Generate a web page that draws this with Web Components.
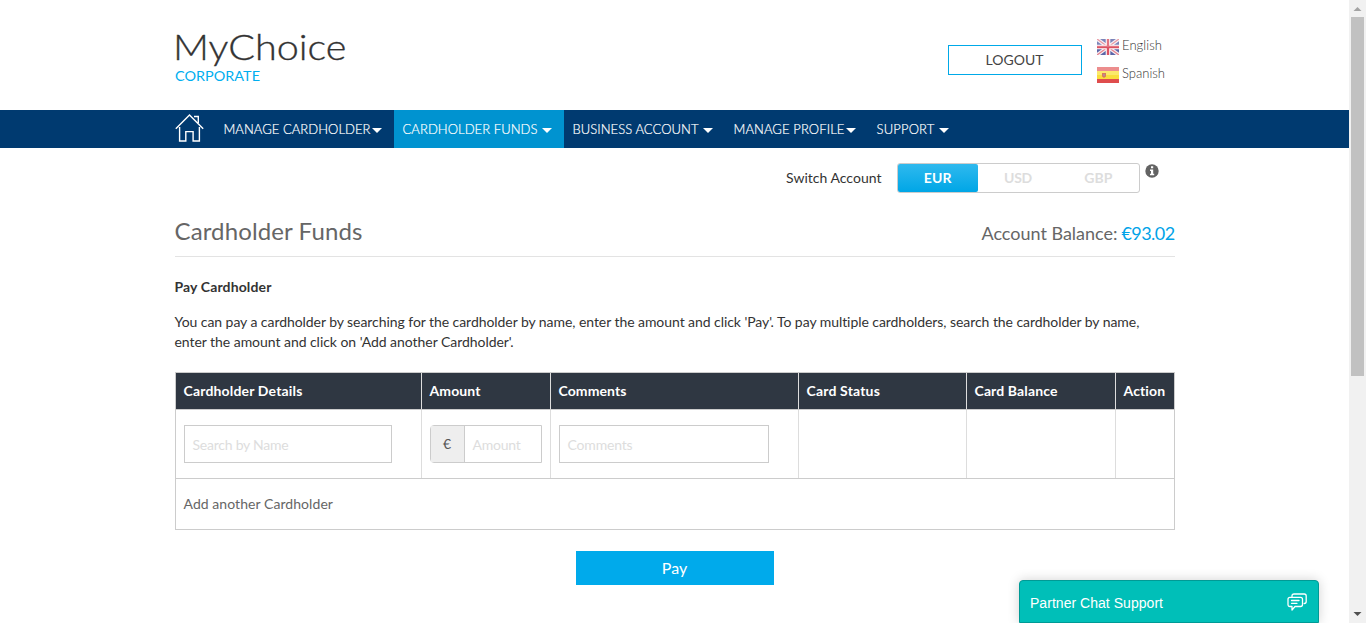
<!DOCTYPE html>
<html lang="en">
<head>
<meta charset="utf-8">
<title>MyChoice Corporate</title>
<style>
html,body{margin:0;height:100%;overflow:hidden;background:#fff}
body{font:14px/20px Lato,sans-serif;color:#333}
</style>
</head>
<body>
<mc-app></mc-app>
<script>
function define(name, html, setup) {
  const t = document.createElement('template');
  t.innerHTML = html;
  customElements.define(name, class extends HTMLElement {
    connectedCallback() {
      if (this.shadowRoot) return;
      this.attachShadow({mode: 'open'}).append(t.content.cloneNode(true));
      if (setup) setup(this, this.shadowRoot);
    }
  });
}

/* Single-line label set to the width in its w attribute: by tracking, or by widening the glyphs when it has "stretch". */
define('fit-text', `<style>:host{display:inline-block;white-space:nowrap;flex:none}span{display:inline-block;transform-origin:0 50%}</style><span><slot></slot></span>`, (el, root) => {
  const s = root.querySelector('span'), w = +el.getAttribute('w');
  const n = el.textContent.trim().length;
  const natural = s.getBoundingClientRect().width;
  if (el.hasAttribute('stretch')) s.style.transform = `scaleX(${w / natural})`;
  else s.style.letterSpacing = ((w - natural) / n) + 'px';
  el.style.width = w + 'px';
});

define('mc-logo', `<style>:host{display:block;padding-top:25px}
.a{display:block;font-size:36px;font-weight:300;line-height:43px;color:#333;-webkit-text-stroke:.35px #333;margin-left:-2px}
.b{display:block;font-size:12.5px;line-height:18px;color:#00aeef}</style>
<fit-text class="a" stretch w="173.500">MyChoice</fit-text><fit-text class="b" stretch w="85">CORPORATE</fit-text>`);

define('mc-language', `<style>:host{display:flex;height:28px;font-size:13px;font-weight:300;line-height:17px;color:#333;gap:3.5px}
::slotted(svg){margin-top:3px;flex:none}
::slotted(fit-text){margin-top:.5px}</style><slot name="flag"></slot><slot></slot>`);

define('mc-header', `<style>:host{display:flex;height:110px;width:1000px;margin:0 auto}
mc-logo{flex:1}
.out{box-sizing:border-box;width:134px;height:30px;margin:45px 15px 0 0;border:1px solid #00a9e8;text-align:center;font-size:14px;line-height:28px;color:#444}
.langs{width:78px;padding-top:36px}</style>
<mc-logo></mc-logo>
<div class="out"><fit-text w="58">LOGOUT</fit-text></div>
<div class="langs">
<mc-language><svg slot="flag" width="22" height="16" viewBox="0 0 22 16"><path fill="#5c66a8" d="M0 0h22v16H0z"/><path d="M0 0l22 16M22 0L0 16" stroke="#f5eef3" stroke-width="3.600"/><path d="M0 0l22 16M22 0L0 16" stroke="#e5828e" stroke-width="1.300"/><path d="M11 0v16M0 8h22" stroke="#fff" stroke-width="4.600"/><path d="M11 0v16M0 8h22" stroke="#dc5262" stroke-width="2.400"/><path fill="#fff" opacity=".2" d="M0 0h22v8H0z"/></svg><fit-text w="40">English</fit-text></mc-language>
<mc-language><svg slot="flag" width="22" height="16" viewBox="0 0 22 16"><path fill="#ec8d8d" d="M0 0h22v4H0z"/><path fill="#fbe96b" d="M0 4h22v4H0z"/><path fill="#f9de3c" d="M0 8h22v4H0z"/><path fill="#df4d4d" d="M0 12h22v4H0z"/><path fill="#d9795c" d="M5 6h4v3.500l-2 1.500-2-1.500z"/><path fill="#b98b93" d="M6 7h2v2H6z"/></svg><fit-text w="43">Spanish</fit-text></mc-language>
</div>`);

define('mc-nav-item', `<style>:host{display:flex;align-items:center;height:38px;padding:0 12px 0 9px;font-size:13px;font-weight:300;color:#fff;-webkit-text-stroke:.2px #fff}
:host([active]){background:#0093d0}
i{width:0;height:0;border:5px solid transparent;border-top-color:#fff;border-bottom:0;margin-top:3px;margin-left:4px}
:host([tight]) i{margin-left:1px}slot{display:block}</style><slot></slot><i></i>`);

define('mc-nav', `<style>:host{display:block;height:38px;background:#003a70}
div{width:1000px;margin:0 auto;display:flex}svg{margin-right:11px;flex:none}</style>
<div><svg width="29" height="38" viewBox="0 0 29 38" fill="none" stroke="#fff" stroke-width="1.400"><path d="M.8 18.700L14.500 5l13.700 13.700M19 6.500h4.300v6.500M4.600 17v14h6.200v-9.400h7.300v9.400h6.300V17"/></svg>
<mc-nav-item tight><fit-text w="147">MANAGE CARDHOLDER</fit-text></mc-nav-item>
<mc-nav-item active><fit-text w="135">CARDHOLDER FUNDS</fit-text></mc-nav-item>
<mc-nav-item><fit-text w="126">BUSINESS ACCOUNT</fit-text></mc-nav-item>
<mc-nav-item tight><fit-text w="111">MANAGE PROFILE</fit-text></mc-nav-item>
<mc-nav-item><fit-text w="58">SUPPORT</fit-text></mc-nav-item></div>`);

define('mc-switch', `<style>:host{display:flex;justify-content:flex-end;padding:15px 16px 0 0;height:45px;box-sizing:border-box}
.l{line-height:30px;margin-right:15px}
.g{box-sizing:border-box;display:flex;width:243px;height:30px;border:1px solid #ccc;border-radius:3px;margin-right:5px}
.g div{flex:1;text-align:center;font-weight:700;line-height:28px;color:#ddd}
.g .on{color:#fff;background:linear-gradient(#2fb9ee,#00a6e6);border-radius:2px}
svg{margin-top:1px}</style>
<fit-text class="l" w="95.500">Switch Account</fit-text>
<div class="g"><div class="on"><fit-text w="28">EUR</fit-text></div><div><fit-text w="28">USD</fit-text></div><div><fit-text w="28">GBP</fit-text></div></div>
<svg width="14" height="14" viewBox="0 0 14 14"><circle cx="7" cy="7" r="6.700" fill="#636363"/><path fill="#fff" d="M6 2.300h2.200v2H6zM5 5.400h3.200v4.400h1V11.300H5V9.800h1V6.900H5z"/></svg>`);

define('mc-title', `<style>:host{display:flex;justify-content:space-between;align-items:flex-start;height:63px;box-sizing:content-box;border-bottom:1px solid #e3e3e3;color:#666}
.t{font-size:24px;line-height:30px;margin-top:23px}.b{display:flex;gap:4px;font-size:18px;line-height:26px;margin-top:27px}
.v{color:#00a3e8}</style>
<fit-text class="t" w="188">Cardholder Funds</fit-text>
<div class="b"><fit-text w="136">Account Balance:</fit-text><fit-text class="v" w="53">€93.02</fit-text></div>`);

define('mc-intro', `<style>:host{display:block;height:115px;padding-top:20px;box-sizing:border-box}
.h{display:block;font-weight:700;margin-bottom:15px}.p{display:block}</style>
<fit-text class="h" w="97">Pay Cardholder</fit-text>
<fit-text class="p" w="965">You can pay a cardholder by searching for the cardholder by name, enter the amount and click 'Pay'. To pay multiple cardholders, search the cardholder by name,</fit-text>
<fit-text class="p" w="339">enter the amount and click on 'Add another Cardholder'.</fit-text>`);

define('mc-field', `<style>:host{display:flex;box-sizing:border-box;height:38px;border:1px solid #ccc;color:#ddd;line-height:38px}
.f{padding-left:8px}
.a{display:none;width:33px;background:#eee;border-right:1px solid #ccc;color:#555;text-align:center;line-height:36px}
:host([prefix]){border-radius:4px 0 0 4px}:host([prefix]) .a{display:block}</style>
<div class="a">€</div><div class="f"><slot></slot></div>`);

define('mc-table', `<style>:host{display:block;border:1px solid #ccc;box-sizing:border-box;height:158px}
.r{display:grid;grid-template-columns:246px 129px 248px 168px 149px 58px;border-bottom:1px solid #ccc}
.r>div{border-right:1px solid #ddd;padding:0 7px 0 8px}.r>div:last-child{border-right:0}
.h{height:36px;background:#2f3742;color:#fff;font-weight:700;line-height:36px}
.b{height:68px}mc-field{margin-top:15px}
.f{height:50px;line-height:50px;padding-left:8px;color:#666}</style>
<div class="r h"><div><fit-text w="119">Cardholder Details</fit-text></div><div><fit-text w="51">Amount</fit-text></div><div><fit-text w="68">Comments</fit-text></div><div><fit-text w="73.500">Card Status</fit-text></div><div><fit-text w="83">Card Balance</fit-text></div><div><fit-text w="42">Action</fit-text></div></div>
<div class="r b"><div><mc-field style="width:208px"><fit-text w="96">Search by Name</fit-text></mc-field></div><div><mc-field prefix style="width:112px"><fit-text w="48">Amount</fit-text></mc-field></div><div><mc-field style="width:210px"><fit-text w="65">Comments</fit-text></mc-field></div><div></div><div></div><div></div></div>
<div class="f"><fit-text w="149.500">Add another Cardholder</fit-text></div>`);

define('mc-button', `<style>:host{display:block;width:198px;height:34px;margin:21px auto 0;background:#00aaeb;color:#fff;font-size:16px;line-height:34px;text-align:center}</style><slot></slot>`);

define('mc-chat', `<style>:host{position:absolute;left:1019px;top:580px;box-sizing:border-box;width:300px;height:43px;display:flex;justify-content:space-between;padding:0 11px 0 10px;border:1px solid #009a95;border-radius:4px 4px 0 0;background:#00bfb8;box-shadow:0 0 12px rgba(0,0,0,.18);color:#fff;font:14px/44px "Liberation Sans",sans-serif}
svg{margin-top:12px}</style><fit-text w="133">Partner Chat Support</fit-text>
<svg width="20" height="19" viewBox="0 0 20 19" fill="none" stroke="#fff" stroke-width="1.300" stroke-linejoin="round" stroke-linecap="round"><path d="M5 3.500V3q0-2 2-2h10.200q2 0 2 2v5.500q0 2-2 2M3 4.300h10.500q2 0 2 2V11.500q0 2-2 2H8l-3 3.500v-3.500H3q-2 0-2-2V6.300q0-2 2-2zM4.500 7.500h7.500M4.500 10.300h5.500"/></svg>`);

define('mc-scrollbar', `<style>:host{display:flex;flex-direction:column;align-items:center;width:17px;height:623px;background:#f1f1f1}
.k{width:13px;height:359px;background:#c1c1c1;margin-bottom:auto}svg{height:17px;width:17px;flex:none}</style>
<svg viewBox="0 0 17 17"><path fill="#a3a3a3" d="M4.500 11h8L8.500 7z"/></svg><div class="k"></div><svg viewBox="0 0 17 17"><path fill="#505050" d="M4.500 6h8l-4 4z"/></svg>`);

define('mc-app', `<style>:host{display:flex;width:1366px;height:623px;overflow:hidden;position:relative}
.page{width:1349px}
main{width:1000px;margin:0 auto}</style>
<div class="page"><mc-header></mc-header><mc-nav></mc-nav>
<main><mc-switch></mc-switch><mc-title></mc-title><mc-intro></mc-intro><mc-table></mc-table><mc-button>Pay</mc-button></main></div>
<mc-scrollbar></mc-scrollbar><mc-chat></mc-chat>`);
</script>
</body>
</html>
